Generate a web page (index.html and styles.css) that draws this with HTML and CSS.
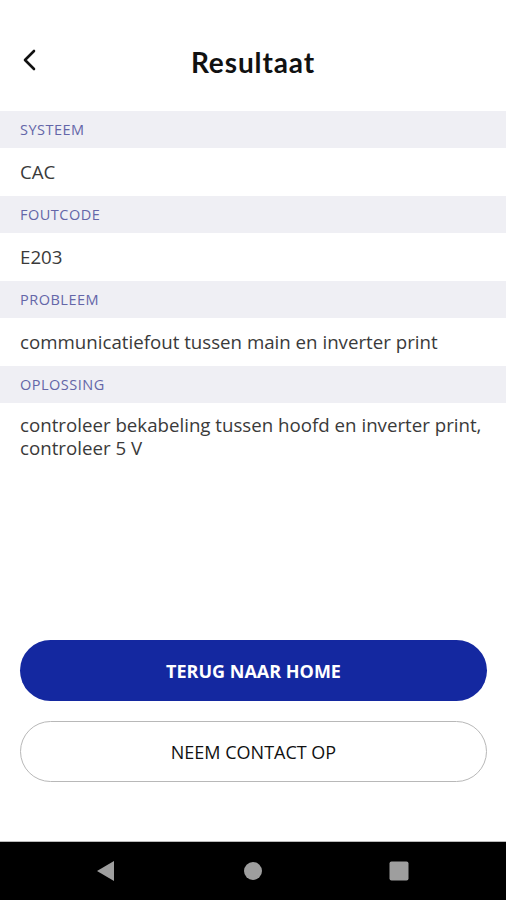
FILE: index.html
```html
<!DOCTYPE html>
<html lang="nl">

<head>
  <meta charset="UTF-8" />
  <meta name="viewport" content="width=device-width, initial-scale=1.0" />
  <title>Resultaat</title>
  <link rel="stylesheet" href="styles.css">
</head>

<body>
  <div class="screen">
    <header class="topbar">
      <button class="back" aria-label="Terug">
        <svg width="16" height="22" viewBox="0 0 16 22">
          <path d="M13 2 L4 11 L13 20" fill="none" stroke="#111" stroke-width="2.6" stroke-linecap="round" stroke-linejoin="round" />
        </svg>
      </button>
      <h1>Resultaat</h1>
    </header>

    <section class="result">
      <div class="label">SYSTEEM</div>
      <div class="value">CAC</div>

      <div class="label">FOUTCODE</div>
      <div class="value">E203</div>

      <div class="label">PROBLEEM</div>
      <div class="value">communicatiefout tussen main en inverter print</div>

      <div class="label">OPLOSSING</div>
      <div class="value multi">controleer bekabeling tussen hoofd en inverter print, controleer 5 V</div>
    </section>

    <div class="actions">
      <button class="btn primary">TERUG NAAR HOME</button>
      <button class="btn outline">NEEM CONTACT OP</button>
    </div>
  </div>

  <nav class="navbar">
    <svg width="20" height="22" viewBox="0 0 20 22"><path d="M18 1 L1 11 L18 21 Z" fill="#9e9e9e" /></svg>
    <svg width="20" height="20" viewBox="0 0 20 20"><circle cx="10" cy="10" r="9" fill="#9e9e9e" /></svg>
    <svg width="20" height="20" viewBox="0 0 20 20"><rect x="0.5" y="0.5" width="19" height="19" rx="2" fill="#9e9e9e" /></svg>
  </nav>
</body>

</html>
```

FILE: styles.css
```css
body {
  margin: 0;
  font-family: "Open Sans", Arial, sans-serif;
  background: #fff;
  color: #3a3a3a;
}

.screen {
  height: 841px;
  display: flex;
  flex-direction: column;
}

.topbar {
  height: 111px;
  position: relative;
  display: flex;
  align-items: center;
  justify-content: center;
}

.topbar h1 {
  margin: 0;
  margin-top: 12px;
  font-family: "Lato", sans-serif;
  font-size: 28px;
  font-weight: 700;
  letter-spacing: 0.9px;
  color: #111;
}

.back {
  position: absolute;
  left: 21px;
  top: 49px;
  border: none;
  background: none;
  padding: 0;
}

.label {
  background: #efeff4;
  height: 37px;
  line-height: 38px;
  padding-left: 20px;
  font-size: 14.5px;
  letter-spacing: 0.5px;
  color: #6466a8;
}

.value {
  min-height: 48px;
  line-height: 48px;
  padding-left: 20px;
  font-size: 18.7px;
  color: #3a3a3a;
}

.value.multi {
  line-height: 23px;
  padding: 10px 20px 0;
}

.actions {
  margin-top: auto;
  padding: 0 19px 59px 20px;
  display: flex;
  flex-direction: column;
  gap: 20px;
}

.btn {
  height: 61px;
  border-radius: 31px;
  font-family: "Open Sans", Arial, sans-serif;
  font-size: 18px;
  cursor: pointer;
}

.btn.primary {
  background: #1428a0;
  border: none;
  color: #fff;
  font-weight: 700;
}

.btn.outline {
  background: #fff;
  border: 1px solid #b8b8b8;
  color: #111;
  font-weight: 500;
}

.navbar {
  height: 59px;
  background: #000;
  border-top: 1px solid #bbb;
  box-sizing: border-box;
  display: flex;
  align-items: center;
  justify-content: space-between;
  padding: 0 97px 0 96px;
}
```
